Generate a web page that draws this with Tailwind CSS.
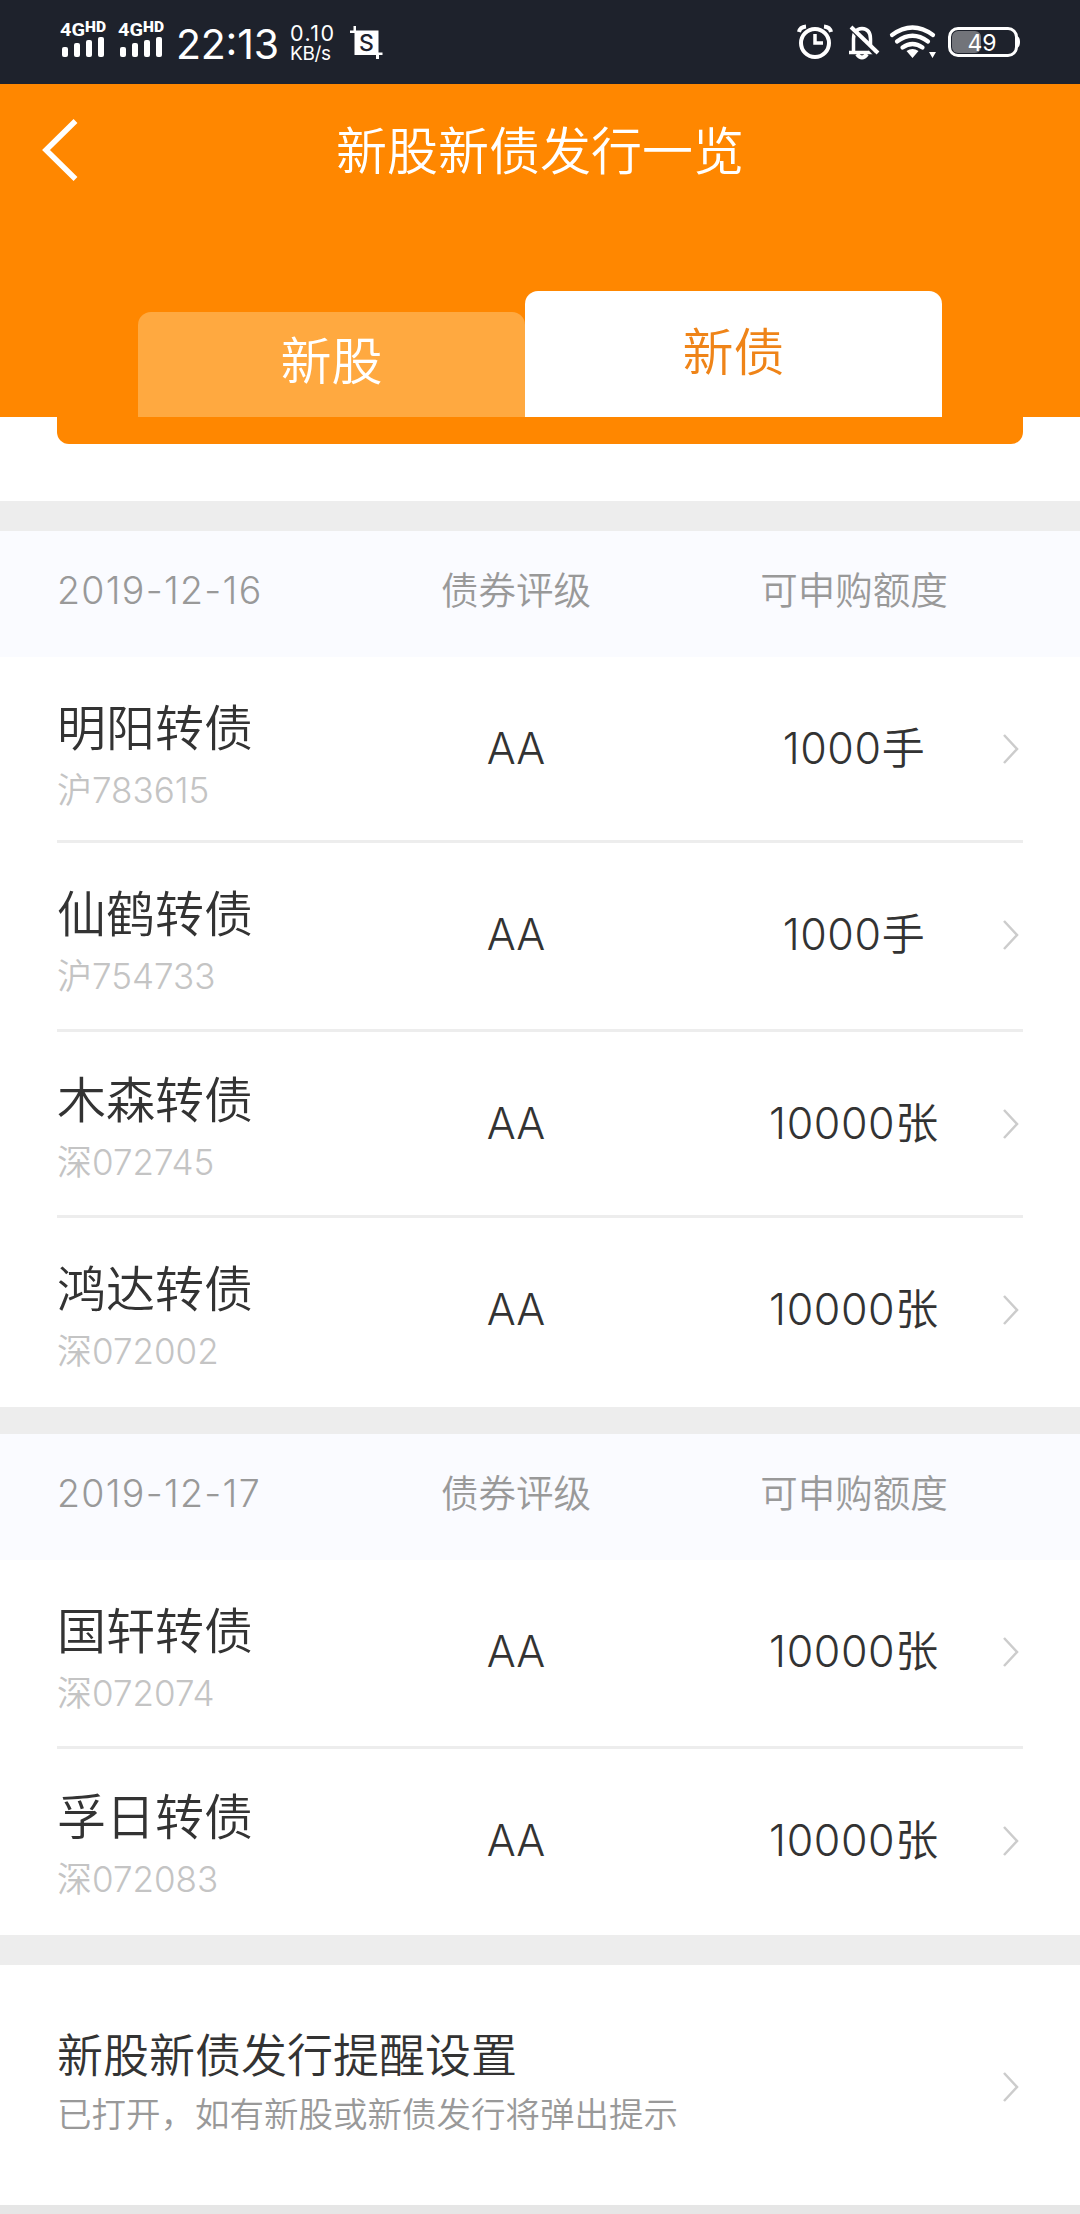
<!DOCTYPE html>
<html lang="zh-CN">
<head>
    <meta charset="UTF-8">
    <meta name="viewport" content="width=device-width, initial-scale=1.0">
    <title>新股新债发行一览</title>
    <script src="https://cdn.jsdelivr.net/npm/@tailwindcss/browser@4"></script>
    <style>
        body { font-family: 'Inter', 'Noto Sans CJK SC', sans-serif; font-weight: 350; }
    </style>
</head>
<body class="bg-white text-[#333]">
    <div id="app" class="w-[1080px] h-[2214px] overflow-hidden flex flex-col">
        <!-- Status bar -->
        <div class="h-[84px] shrink-0 bg-[#1e222c] text-white flex items-center justify-between pl-[60px] pr-[60px]">
            <svg width="330" height="84" viewBox="60 0 330 84" fill="#fff">
                <g font-family="Roboto, sans-serif" font-weight="700">
                    <text x="60" y="36" font-size="19" textLength="25" lengthAdjust="spacingAndGlyphs">4G</text>
                    <text x="85" y="32" font-size="14" font-weight="900" textLength="21" lengthAdjust="spacingAndGlyphs">HD</text>
                    <text x="118" y="36" font-size="19" textLength="25" lengthAdjust="spacingAndGlyphs">4G</text>
                    <text x="143" y="32" font-size="14" font-weight="900" textLength="21" lengthAdjust="spacingAndGlyphs">HD</text>
                </g>
                <rect x="62" y="47" width="6" height="10" rx="2"/>
                <rect x="74" y="43" width="6" height="14" rx="2"/>
                <rect x="86" y="40" width="6" height="17" rx="2"/>
                <rect x="98" y="37" width="6" height="20" rx="2"/>
                <rect x="120" y="47" width="6" height="10" rx="2"/>
                <rect x="132" y="43" width="6" height="14" rx="2"/>
                <rect x="144" y="40" width="6" height="17" rx="2"/>
                <rect x="156" y="37" width="6" height="20" rx="2"/>
                <g font-family="Inter, sans-serif" font-weight="400">
                    <text x="176" y="59" font-size="41" textLength="103">22:13</text>
                    <text x="290" y="41" font-size="21.5" textLength="44">0.10</text>
                    <text x="290" y="60" font-size="19" textLength="41">KB/s</text>
                </g>
                <path d="M350 30.500h28.500v22h4v2.500h-3.500v4h-3v-4h-21.500v-22h-4.500zM353.500 26h2.500v6h-2.500z"/>
                <text x="366.500" y="51" text-anchor="middle" font-family="Inter, sans-serif" font-size="23" font-weight="500" fill="#1e222c">S</text>
            </svg>
            <svg width="225" height="84" viewBox="795 0 225 84" fill="none" stroke="#fff">
                <!-- alarm -->
                <circle cx="815" cy="43" r="14" stroke-width="4"/>
                <path d="M815 34v9h8" stroke-width="3.500"/>
                <path d="M799 32q1-5 7-5.500M831 32q-1-5-7-5.500" stroke-width="4"/>
                <!-- muted bell -->
                <path d="M849 52.500h26M853.500 52V39q0-10 8.500-10.500q8.500.5 8.500 10.500v13" stroke-width="3.500"/>
                <path d="M857 54q5 7 10 0" stroke-width="4"/>
                <path d="M853 31l22 24" stroke="#1e222c" stroke-width="3"/>
                <path d="M851 27l27 26" stroke-width="4"/>
                <!-- wifi -->
                <path d="M892 35q20.500-15 41 0M897 41.500q15.500-11.500 31 0M902.500 47.500q10-7 20 0" stroke-width="4.200" stroke-linecap="round"/>
                <path d="M906.500 51q6-4 12 0l-6 7zM929 52h7l-3.500 6z" fill="#fff" stroke="none"/>
                <!-- battery -->
                <rect x="952" y="31" width="29" height="22" rx="6" fill="#72747a" stroke="none"/>
                <rect x="949.500" y="28.500" width="67" height="27" rx="8.500" stroke-width="3"/>
                <path d="M1017 36q3 1 3 6t-3 6z" fill="#fff" stroke="none"/>
                <text x="982" y="51" text-anchor="middle" font-family="Inter, sans-serif" font-size="23" font-weight="400" fill="#fff" stroke="none" textLength="29">49</text>
            </svg>
        </div>

        <!-- Header with tabs -->
        <header class="h-[333px] shrink-0 bg-[#ff8700] text-white flex flex-col justify-between">
            <div class="h-[134px] pl-[42px] pr-[42px] flex items-center justify-between">
                <svg class="w-9 h-[62px] mb-[3px]" viewBox="0 0 36 62" fill="none" stroke="#fff" stroke-width="5.5"><path d="M33.500 2L4 31l29.500 29"/></svg>
                <h1 class="text-[51px] leading-none">新股新债发行一览</h1>
                <span class="w-9"></span>
            </div>
            <div class="flex items-end pl-[138px]">
                <button class="w-[387px] h-[105px] rounded-tl-[13px] rounded-tr-[13px] bg-[#ffa940] text-[51px] leading-none pb-[6px]">新股</button>
                <button class="w-[417px] h-[126px] rounded-t-[13px] bg-white text-[#ef8418] text-[51px] leading-none pb-1">新债</button>
            </div>
        </header>
        <div class="h-[27px] shrink-0 mx-[57px] rounded-b-[12px] bg-[#ff8700]"></div>
        <div class="h-[30px] shrink-0 mt-[57px] bg-[#ededed]"></div>

        <main id="bonds"></main>

        <!-- Reminder settings -->
        <section class="h-[240px] shrink-0 px-[57px] flex items-center justify-between">
            <div>
                <h2 class="text-[46px] leading-[60px]">新股新债发行提醒设置</h2>
                <p class="text-[34.5px] leading-[60px] text-[#999]">已打开，如有新股或新债发行将弹出提示</p>
            </div>
            <svg class="w-[18px] h-[30px] mr-[3px] mt-[3px]" viewBox="0 0 18 30" fill="none" stroke="#ccc" stroke-width="2.5"><path d="M2 1l13 14L2 29"/></svg>
        </section>
        <div class="h-[9px] shrink-0 bg-[#e6e6e6]"></div>
    </div>

    <script>
        // last two values: row height and offset of the name block
        const groups = [
            { date: '2019-12-16', gap: 'h-[27px]', rows: [
                ['明阳转债', '沪783615', 'AA', '1000手', 'h-[186px]', 'pt-[20px]'],
                ['仙鹤转债', '沪754733', 'AA', '1000手', 'h-[189px]', 'pt-[20px]'],
                ['木森转债', '深072745', 'AA', '10000张', 'h-[186px]', 'pt-[14px]'],
                ['鸿达转债', '深072002', 'AA', '10000张', 'h-[189px]', 'pt-[20px]'],
            ] },
            { date: '2019-12-17', gap: 'h-[30px]', rows: [
                ['国轩转债', '深072074', 'AA', '10000张', 'h-[189px]', 'pt-[20px]'],
                ['孚日转债', '深072083', 'AA', '10000张', 'h-[186px]', 'pt-[14px]'],
            ] },
        ];

        const renderRow = ([name, code, rating, quota, height, offset]) => `
            <div class="${height} mx-[57px] border-b-[3px] border-[#ededed] last:border-0">
                <div class="h-[183px] grid grid-cols-[300px_318px_358px_18px] items-center">
                    <div class="${offset}">
                        <p class="text-[49px] leading-[62px]">${name}</p>
                        <p class="text-[35px] leading-[60px] text-[#c4c4c4]">${code}</p>
                    </div>
                    <p class="text-[43px] text-center">${rating}</p>
                    <p class="text-[43px] text-center tracking-[0.6px]">${quota}</p>
                    <svg class="w-[18px] h-[30px] -ml-[31px]" viewBox="0 0 18 30" fill="none" stroke="#ccc" stroke-width="2.5"><path d="M2 1l13 14L2 29"/></svg>
                </div>
            </div>`;

        document.getElementById('bonds').innerHTML = groups.map(g => `
            <section>
                <div class="h-[126px] px-[57px] bg-[#fafbff] text-[#999] text-[37.5px] grid grid-cols-[300px_318px_358px] items-center pb-[6px]">
                    <span class="tracking-[1.3px]">${g.date}</span>
                    <span class="text-center">债券评级</span>
                    <span class="text-center">可申购额度</span>
                </div>
                <div>${g.rows.map(renderRow).join('')}</div>
                <div class="${g.gap} bg-[#ededed]"></div>
            </section>`).join('');
    </script>
</body>
</html>
